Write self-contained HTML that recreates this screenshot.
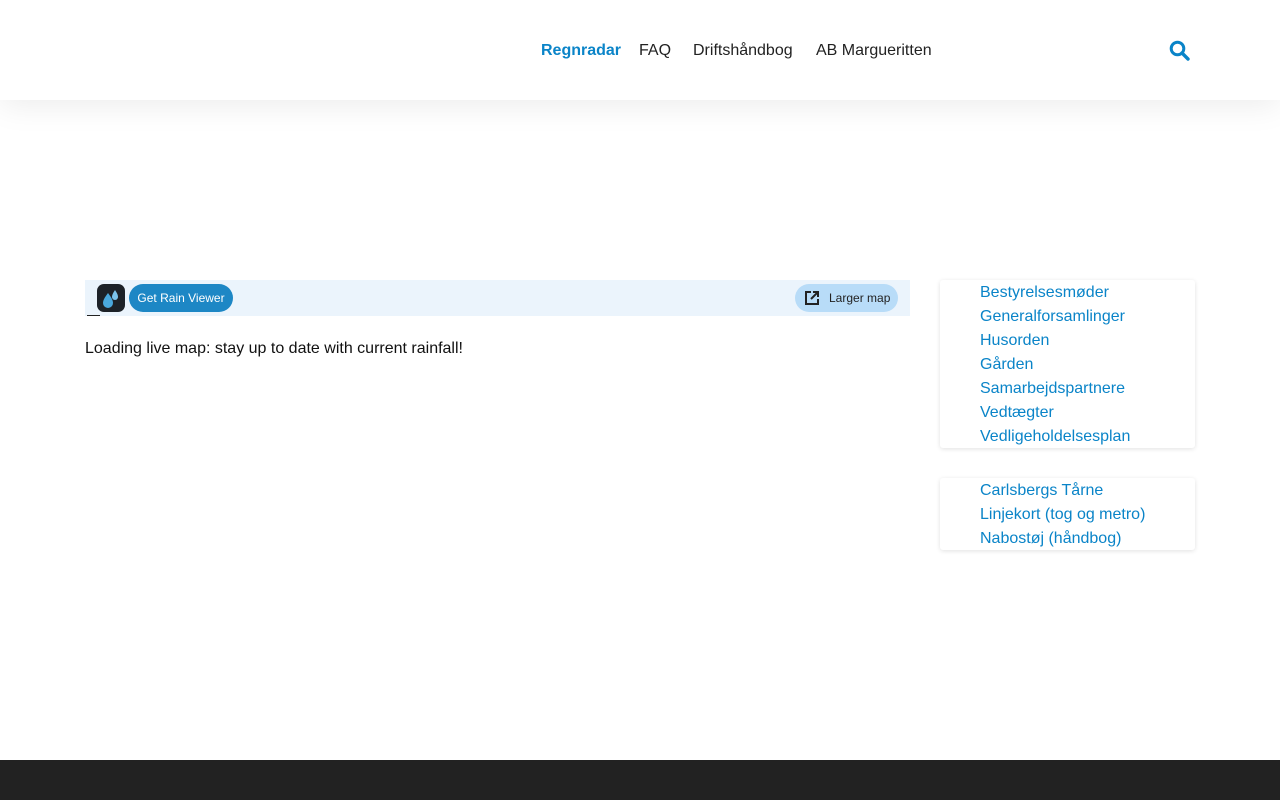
<!DOCTYPE html>
<html><head><meta charset="utf-8"><style>
*{margin:0;padding:0;box-sizing:border-box}
body{width:1280px;height:800px;position:relative;background:#fff;font-family:"Liberation Sans",sans-serif;overflow:hidden}
.hdr{position:absolute;left:0;top:0;width:1280px;height:100px;background:#fff;box-shadow:0 5px 30px rgba(0,0,0,.08)}
.nav a{position:absolute;top:42px;font-size:16px;color:#222;text-decoration:none}
.bar{position:absolute;left:85px;top:280px;width:825px;height:36px;background:#ebf4fc}
.logo{position:absolute;left:12px;top:4px;width:28px;height:28px;border-radius:7px;background:#1d2228}
.get{position:absolute;left:44px;top:4px;width:104px;height:28px;border-radius:14px;background:#1d87c5;color:#fff;font-size:12px;line-height:28px;text-align:center}
.lm{position:absolute;left:710px;top:4px;width:103px;height:28px;border-radius:14px;background:#b8dcf8;color:#222;font-size:12px;line-height:28px;padding-left:34px}
.card{position:absolute;left:940px;width:255px;background:#fff;box-shadow:0 1px 5px rgba(0,0,0,.12);border-radius:3px}
.card a{display:block;padding-left:40px;font-size:16px;line-height:24px;color:#0a84c8;text-decoration:none;position:relative;top:1px}
.foot{position:absolute;left:0;top:760px;width:1280px;height:40px;background:#222}
</style></head><body>
<div class="hdr nav">
<a style="left:541px;color:#0a84c8;font-weight:bold">Regnradar</a>
<a style="left:639px">FAQ</a>
<a style="left:693px">Driftshåndbog</a>
<a style="left:816px">AB Margueritten</a>
<svg style="position:absolute;left:1169px;top:40px" width="21" height="21" viewBox="0 0 21 21"><circle cx="8.5" cy="8.5" r="6.3" fill="none" stroke="#0a84c8" stroke-width="3"/><line x1="13" y1="13" x2="19" y2="19" stroke="#0a84c8" stroke-width="3.4" stroke-linecap="round"/></svg>
</div>
<div class="bar">
<div class="logo"><svg width="28" height="28" viewBox="0 0 28 28"><path d="M11 9 C8 13 6 16 6 19 a5 5 0 0 0 10 0 c0-3-2-6-5-10z" fill="#4aa8dc"/><path d="M18 6 c-2 3-3 5-3 7 a3 3 0 0 0 6 0 c0-2-1-4-3-7z" fill="#7cc4ec"/></svg></div>
<div class="get">Get Rain Viewer</div>
<div class="lm"><svg style="position:absolute;left:10px;top:7px" width="14" height="14" viewBox="0 0 14 14"><path d="M6 1H1v12h12V8M8 1h5v5M13 1L6 8" fill="none" stroke="#222" stroke-width="2"/></svg>Larger map</div>
</div>
<div style="position:absolute;left:87px;top:315px;width:13px;height:1px;background:#222"></div>
<div style="position:absolute;left:85px;top:340px;font-size:16px;color:#111">Loading live map: stay up to date with current rainfall!</div>
<div class="card" style="top:280px;height:168px">
<a>Bestyrelsesmøder</a><a>Generalforsamlinger</a><a>Husorden</a><a>Gården</a><a>Samarbejdspartnere</a><a>Vedtægter</a><a>Vedligeholdelsesplan</a>
</div>
<div class="card" style="top:478px;height:72px">
<a>Carlsbergs Tårne</a><a>Linjekort (tog og metro)</a><a>Nabostøj (håndbog)</a>
</div>
<div class="foot"></div>
</body></html>
